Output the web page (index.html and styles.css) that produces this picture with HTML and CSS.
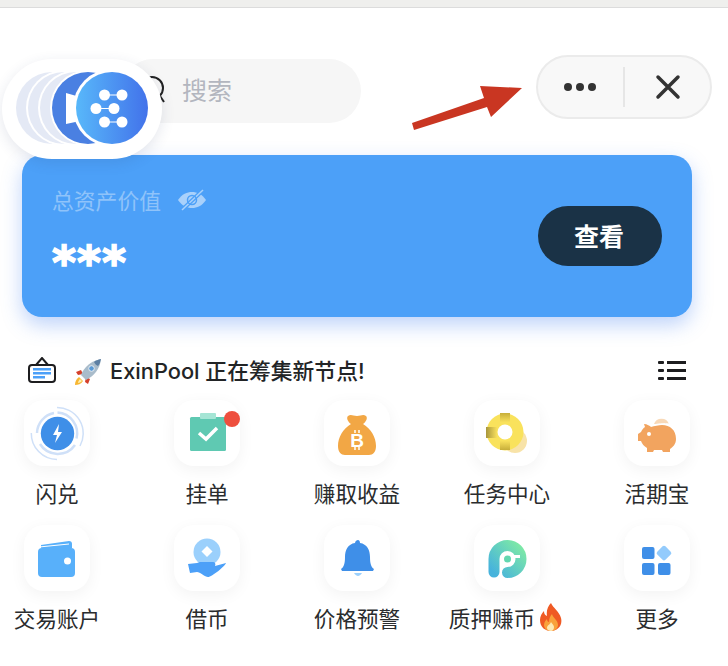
FILE: index.html
```html
<!DOCTYPE html>
<html lang="zh-CN">
<head>
<meta charset="utf-8">
<title>钱包</title>
<link rel="stylesheet" href="styles.css">
</head>
<body>
<div class="topbar"></div>
<header class="header">
  <div class="search">
    <svg class="search-icon" width="30" height="30" viewBox="0 0 30 30"><circle cx="13" cy="12" r="11" fill="none" stroke="#222" stroke-width="2"/><path d="M21 20l4 6" stroke="#222" stroke-width="2"/></svg>
    <span class="search-text">搜索</span>
  </div>
  <div class="capsule">
    <div class="capsule-btn"><svg class="dots" width="32" height="10" viewBox="0 0 32 10"><g fill="#333"><circle cx="4" cy="5" r="4"/><circle cx="16" cy="5" r="4"/><circle cx="28" cy="5" r="4"/></g></svg></div>
    <div class="capsule-line"></div>
    <div class="capsule-btn"><svg width="26" height="26" viewBox="0 0 26 26"><path d="M3 3l20 20M23 3L3 23" stroke="#333" stroke-width="3.500" stroke-linecap="round"/></svg></div>
  </div>
</header>

<div class="bubble">
  <svg width="160" height="100" viewBox="0 0 160 100">
    <defs>
      <linearGradient id="lg" x1="0" x2="1" y1="0" y2="0"><stop offset="0" stop-color="#58b8fa"/><stop offset="1" stop-color="#4272ea"/></linearGradient>
    </defs>
    <circle cx="50" cy="49" r="36" fill="#e4e9f5"/>
    <circle cx="62" cy="49" r="38" fill="#fff"/><circle cx="62" cy="49" r="36" fill="#e4e9f5"/>
    <circle cx="74" cy="49" r="38" fill="#fff"/><circle cx="74" cy="49" r="36" fill="#e4e9f5"/>
    <circle cx="86" cy="49" r="38" fill="#fff"/><circle cx="86" cy="49" r="36" fill="#4a80e2"/>
    <path d="M64 34l14 4v24l-14 3z" fill="#fff"/>
    <circle cx="110" cy="49" r="39" fill="#fff"/>
    <circle cx="110" cy="49" r="36" fill="url(#lg)"/>
    <g fill="#fff">
      <circle cx="102.500" cy="36" r="5.500"/><circle cx="120" cy="36" r="5.500"/><rect x="102" y="35.500" width="18" height="1"/>
      <circle cx="94" cy="49.500" r="5.500"/><circle cx="112" cy="49.500" r="5.500"/><rect x="94" y="49" width="18" height="1"/>
      <circle cx="102.500" cy="63" r="5.500"/><circle cx="120" cy="63" r="5.500"/><rect x="102" y="62.500" width="18" height="1"/>
    </g>
  </svg>
</div>

<svg class="arrow" width="112" height="46" viewBox="410 85 112 46"><polygon points="412,123 484,98 480,86 522,88 491,117 487,107 414,130" fill="#c93622"/></svg>

<section class="card">
  <div class="card-left">
    <div class="asset-label">
      <span>总资产价值</span>
      <svg class="eye" width="28" height="22" viewBox="0 0 28 22"><path d="M0 11C4 5 9 3 14 3s10 2 14 8c-4 6-9 8-14 8S4 17 0 11z" fill="#a9d1fb"/><path d="M4 21L25 1" stroke="#4ca0f8" stroke-width="4"/><path d="M4 21L25 1" stroke="#a9d1fb" stroke-width="1.500"/><circle cx="14" cy="11" r="4.500" fill="none" stroke="#4ca0f8" stroke-width="1.500"/></svg>
    </div>
    <div class="asset-value">***</div>
  </div>
  <button class="view-btn">查看</button>
</section>

<div class="notice">
  <svg class="notice-icon" width="28" height="26" viewBox="0 0 28 26"><path d="M8 8l6-7 6 7" fill="none" stroke="#1d1d1f" stroke-width="2"/><rect x="1" y="8" width="26" height="17" rx="3" fill="#fff" stroke="#1d1d1f" stroke-width="2"/><g fill="#4ca0f8"><rect x="5" y="11" width="18" height="2.500"/><rect x="5" y="15" width="18" height="2.500"/><rect x="5" y="19" width="12" height="2.500"/></g></svg>
  <svg class="rocket" width="28" height="28" viewBox="0 0 28 28"><path d="M5 19c-3 2-4 5-4 8 3 0 6-1 8-4z" fill="#f7b733"/><path d="M6 21c-1 1-2 3-2 4 1 0 3-1 4-2z" fill="#fdf0b0"/><path d="M7 12l-5 2 2 3 5-1zM16 21l-2 5-3-2 1-5z" fill="#d5402b"/><path d="M7 17C10 9 17 3 27 1c-1 10-7 17-15 21z" fill="#a9bccb"/><path d="M27 1c-3 1-5 1-7 3 1 2 2 3 4 4 2-2 2-4 3-7z" fill="#5c7fa3"/><circle cx="17.500" cy="10.500" r="2.800" fill="#5a9ad6" stroke="#e8eef3"/></svg>
  <span class="notice-text">ExinPool 正在筹集新节点!</span>
  <svg class="list-icon" width="28" height="20" viewBox="0 0 28 20"><g fill="#1d1d1f"><rect x="0" y="1" width="6" height="3" rx="1"/><rect x="9" y="1" width="19" height="3"/><rect x="0" y="9" width="6" height="3" rx="1"/><rect x="9" y="9" width="19" height="3"/><rect x="0" y="17" width="6" height="3" rx="1"/><rect x="9" y="17" width="19" height="3"/></g></svg>
</div>

<nav class="grid">
  <a class="item">
    <div class="tile"><svg width="66" height="66" viewBox="0 0 66 66"><g fill="none" stroke="#cfe0f8"><path d="M33 7.500A26 26 0 0 1 56 46" stroke-width="1.500"/><path d="M7.300 33A26 26 0 0 0 33 59.500" stroke-width="1.500"/><path d="M33.500 12.500a21 21 0 0 1 19 26" stroke-width="2.500"/><path d="M51 45a21 21 0 0 1-35-1" stroke-width="2.500"/><path d="M13 33a21 21 0 0 1 17-20" stroke-width="2.500"/></g><circle cx="33.500" cy="33.500" r="16.700" fill="#3f8fe8"/><path d="M35 24l-6 11h4l-2 8 7-11h-4z" fill="#fff"/></svg></div>
    <span class="label">闪兑</span>
  </a>
  <a class="item">
    <div class="tile"><svg width="66" height="66" viewBox="0 0 66 66"><rect x="16" y="17" width="36" height="34" rx="1.500" fill="#5fc9b2"/><rect x="26" y="13" width="16" height="6" rx="1" fill="#a5e5d5"/><path d="M25 33l7 6 11-11" fill="none" stroke="#fff" stroke-width="3.500"/><circle cx="58" cy="19" r="8" fill="#ee4f3e"/></svg></div>
    <span class="label">挂单</span>
  </a>
  <a class="item">
    <div class="tile"><svg width="66" height="66" viewBox="0 0 66 66"><path d="M24 16c3-2 5 0 9 0s6-2 9 0c2 2 0 6-3 8 8 5 13 13 13 22 0 6-3 9-7 9H21c-4 0-7-3-7-9 0-9 5-17 13-22-3-2-5-6-3-8z" fill="#f2a745"/><text x="33" y="47" class="btc">B</text><path d="M31 30v3M35 30v3M31 47v3M35 47v3" stroke="#fff" stroke-width="1.500"/></svg></div>
    <span class="label">赚取收益</span>
  </a>
  <a class="item">
    <div class="tile"><svg width="66" height="66" viewBox="0 0 66 66"><defs><linearGradient id="g1" x1="0" x2="0" y1="0" y2="1"><stop offset="0" stop-color="#c7ae3a"/><stop offset="1" stop-color="#f8e05c"/></linearGradient><linearGradient id="g2" x1="0" x2="1" y1="0" y2="0"><stop offset="0" stop-color="#a8963c"/><stop offset="1" stop-color="#f8e05c"/></linearGradient><linearGradient id="g3" x1="0" x2="0" y1="1" y2="0"><stop offset="0" stop-color="#c7ae3a"/><stop offset="1" stop-color="#f8e05c"/></linearGradient></defs><circle cx="41" cy="41" r="12" fill="#f8e3a8"/><circle cx="31" cy="32" r="18.500" fill="#f9e25c"/><rect x="26" y="13" width="10" height="9" fill="url(#g1)"/><rect x="12" y="27" width="11" height="11" fill="url(#g2)"/><rect x="26" y="41" width="10" height="9" fill="url(#g3)"/><circle cx="31" cy="32" r="7.500" fill="#fff"/></svg></div>
    <span class="label">任务中心</span>
  </a>
  <a class="item">
    <div class="tile"><svg width="66" height="66" viewBox="0 0 66 66"><path d="M30 24a8 8 0 0 1 15 0z" fill="#f8d9b8"/><path d="M20 24c3 0 6 2 7 3 3-1 8-2 11-2 8 0 14 5 14 14 0 5-3 8-6 10v3h-7l-1-2h-8l-1 2h-6v-4c-3-2-5-4-6-7h-3v-7l3-2c1-2 2-4 4-5z" fill="#f2a45f"/><path d="M29 25c4-1 11-2 17-1" fill="none" stroke="#fff" stroke-width="1"/><circle cx="25" cy="34" r="2" fill="#fff"/></svg></div>
    <span class="label">活期宝</span>
  </a>
  <a class="item">
    <div class="tile"><svg width="66" height="66" viewBox="0 0 66 66"><path d="M17 20l28-4c2 0 3 1 3 3v4H17z" fill="#58b0fa"/><path d="M15 22l30-3" stroke="#fff" stroke-width="1"/><rect x="14" y="23" width="37" height="29" rx="4" fill="#58b0fa"/><circle cx="43.500" cy="36" r="3.500" fill="#fff"/></svg></div>
    <span class="label">交易账户</span>
  </a>
  <a class="item">
    <div class="tile"><svg width="66" height="66" viewBox="0 0 66 66"><circle cx="33" cy="27" r="13.500" fill="#9bd0fc"/><path d="M33 21l5.500 5.500L33 32l-5.500-5.500z" fill="#fff"/><path d="M14 39l9-1 3-1h13c2 0 3 2 2 4l11-3c-1 3-14 14-18 14-3 0-8-5-11-5l-7 1z" fill="#4ca0f8"/></svg></div>
    <span class="label">借币</span>
  </a>
  <a class="item">
    <div class="tile"><svg width="66" height="66" viewBox="0 0 66 66"><path d="M34 15c1 0 2 1 2 3 7 1 10 7 10 14 0 6 1 10 4 12l-1 2H18l-1-2c3-2 4-6 4-12 0-7 3-13 10-14 0-2 2-3 3-3z" fill="#3f8fe8"/><path d="M30 48h8c-1 2-3 3-4 3s-3-1-4-3z" fill="#9bd0fc"/></svg></div>
    <span class="label">价格预警</span>
  </a>
  <a class="item">
    <div class="tile"><svg width="66" height="66" viewBox="0 0 66 66"><defs><linearGradient id="pg" x1="0" x2="1" y1="1" y2="0"><stop offset="0" stop-color="#47b3dc"/><stop offset="1" stop-color="#7de9a6"/></linearGradient></defs><path d="M20 47V34a13.500 13.500 0 1 1 13.500 13.500" fill="none" stroke="url(#pg)" stroke-width="11" stroke-linecap="round"/><circle cx="33.500" cy="34" r="3.500" fill="#62d7b0"/><path d="M40 30h6v3h-6z" fill="#fff"/></svg></div>
    <span class="label">质押赚币<svg class="fire" width="22" height="28" viewBox="0 0 22 28"><path d="M11 0c2 5 8 8 10 15 2 8-4 13-10 13S0 24 0 17c0-4 2-7 4-9 0 3 1 4 3 5C6 8 8 3 11 0z" fill="#ef5a24"/><path d="M12 11c1 4 6 6 6 11 0 3-3 6-7 6s-7-3-7-6c0-3 2-5 3-6 0 2 1 3 2 3 0-3 1-6 3-8z" fill="#f9a13a"/><path d="M11 19c1 2 3 3 3 5s-1 4-3 4-4-1-4-3c0-3 3-3 4-6z" fill="#fde8b2"/></svg></span>
  </a>
  <a class="item">
    <div class="tile"><svg width="66" height="66" viewBox="0 0 66 66"><g fill="#3f8fe8"><rect x="18" y="22" width="12.500" height="12" rx="2"/><rect x="18" y="38" width="12.500" height="12" rx="2"/><rect x="34" y="38" width="12.500" height="12" rx="2"/></g><rect x="34.300" y="22.300" width="11.500" height="11.500" rx="2" transform="rotate(45 40 28)" fill="#93cbfc"/></svg></div>
    <span class="label">更多</span>
  </a>
</nav>
</body>
</html>
```

FILE: styles.css
```css
* { box-sizing: border-box; }

html, body {
  margin: 0;
  height: 666px;
  overflow: hidden;
  background: #fff;
}

body {
  position: relative;
  font-family: Inter, "Noto Sans CJK SC", sans-serif;
  color: #222426;
}

.topbar {
  height: 8px;
  background: #efefed;
  border-bottom: 1px solid #dcdcdc;
}

.header {
  display: flex;
  justify-content: space-between;
  align-items: flex-start;
  padding: 47px 16px 0 121px;
}

.search {
  display: flex;
  align-items: center;
  gap: 13px;
  width: 240px;
  height: 64px;
  margin-top: 4px;
  padding-left: 18px;
  border-radius: 32px;
  background: #f6f6f6;
}

.search-icon { flex: none; }

.search-text {
  margin-bottom: 4px;
  font-size: 25px;
  color: #b3b6bf;
}

.capsule {
  display: flex;
  align-items: center;
  width: 176px;
  height: 64px;
  border: 2px solid #ebebeb;
  border-radius: 32px;
  background: #f8f8f8;
}

.capsule-btn {
  flex: 1;
  display: flex;
  justify-content: center;
  align-items: center;
}

.dots { margin-right: 2px; }

.capsule-line {
  flex: none;
  width: 2px;
  height: 40px;
  background: #e6e6e6;
}

.bubble {
  position: absolute;
  left: 2px;
  top: 59px;
  width: 160px;
  height: 100px;
  border-radius: 50px;
  background: #fff;
  box-shadow: 0 4px 14px rgba(40, 60, 110, 0.12);
  z-index: 2;
}

.bubble svg { display: block; }

.arrow {
  position: absolute;
  left: 410px;
  top: 85px;
}

.card {
  display: flex;
  justify-content: space-between;
  align-items: center;
  width: 670px;
  height: 162px;
  margin: 32px 0 0 22px;
  padding: 0 30px;
  border-radius: 20px;
  background: #4ca0f8;
  box-shadow: 0 8px 20px rgba(70, 130, 240, 0.35);
}

.asset-label {
  display: flex;
  align-items: center;
  gap: 17px;
  height: 30px;
  font-size: 21.800px;
  color: #8fc3fa;
}

.eye { margin-top: 2px; }

.asset-value {
  height: 40px;
  margin-top: 29px;
  margin-bottom: 5px;
  font-family: "DejaVu Sans", sans-serif;
  font-size: 46px;
  font-weight: 700;
  line-height: 40px;
  letter-spacing: 1px;
  color: #fff;
  -webkit-text-stroke: 1.500px #fff;
}

.view-btn {
  width: 124px;
  height: 60px;
  padding: 0 2px 3px 0;
  border: 0;
  border-radius: 30px;
  background: #1a3246;
  font-family: "Noto Sans CJK SC", sans-serif;
  font-size: 25px;
  font-weight: 700;
  color: #fff;
}

.notice {
  display: flex;
  align-items: center;
  height: 34px;
  margin-top: 36px;
  padding: 0 42px 0 28px;
}

.rocket {
  flex: none;
  margin: 4px 8px 0 18px;
}

.notice-text {
  flex: 1;
  margin-bottom: 2px;
  font-size: 21.800px;
  font-weight: 500;
  white-space: nowrap;
}

.list-icon { flex: none; }

.grid {
  display: grid;
  grid-template-columns: repeat(5, 150px);
  grid-auto-rows: 125px;
  width: 750px;
  margin: 13px 0 0 -18px;
}

.item {
  display: flex;
  flex-direction: column;
  align-items: center;
}

.tile {
  width: 66px;
  height: 66px;
  border-radius: 20px;
  background: #fff;
  box-shadow: 0 4px 16px rgba(0, 0, 0, 0.05);
}

.tile svg { display: block; }

.label {
  display: flex;
  align-items: center;
  height: 32px;
  margin-top: 10px;
  font-size: 21.600px;
  color: #2a2c2e;
  white-space: nowrap;
}

.fire {
  margin-left: 5px;
  margin-right: 3px;
}

.btc {
  font-family: "Liberation Sans", sans-serif;
  font-size: 19px;
  font-weight: 700;
  text-anchor: middle;
  fill: #fff;
}
```
